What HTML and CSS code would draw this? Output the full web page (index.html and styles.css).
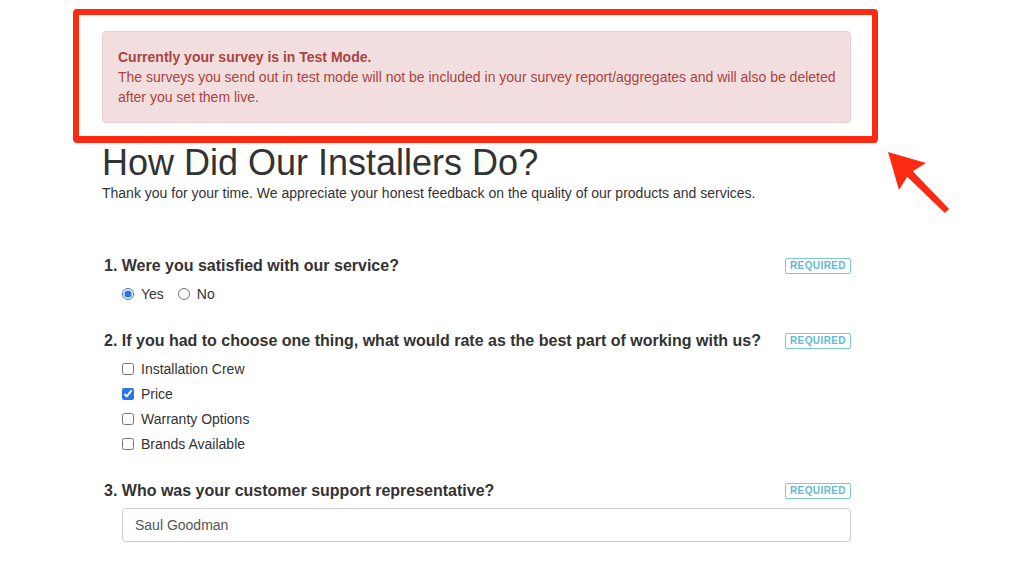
FILE: index.html
```html
<!DOCTYPE html>
<html lang="en">
<head>
    <meta charset="UTF-8">
    <meta name="viewport" content="width=device-width, initial-scale=1.0">
    <title>How Did Our Installers Do?</title>
    <link rel="stylesheet" href="styles.css">
</head>
<body>
    <div class="page">
        <div class="survey">
            <!-- Test mode notice -->
            <div class="notice-wrap">
                <div class="alert">
                    <strong>Currently your survey is in Test Mode.</strong><br>
                    The surveys you send out in test mode will not be included in your survey report/aggregates and will also be deleted after you set them live.
                </div>
                <div class="highlight"></div>
                <svg class="pointer" width="70" height="70" viewBox="0 0 70 70">
                    <polygon points="3,2 41,13 27.8,21.2 64.1,58.9 59.9,63.1 22.2,26.8 14,40" fill="#fb2a10"/>
                </svg>
            </div>

            <h1>How Did Our Installers Do?</h1>
            <p class="intro">Thank you for your time. We appreciate your honest feedback on the quality of our products and services.</p>

            <!-- Questions -->
            <div class="question">
                <div class="q-head">
                    <span class="q-title">1. Were you satisfied with our service?</span>
                    <span class="badge">REQUIRED</span>
                </div>
                <div class="options inline">
                    <label class="option"><input type="radio" name="q1" checked> Yes</label>
                    <label class="option"><input type="radio" name="q1"> No</label>
                </div>
            </div>

            <div class="question">
                <div class="q-head">
                    <span class="q-title">2. If you had to choose one thing, what would rate as the best part of working with us?</span>
                    <span class="badge">REQUIRED</span>
                </div>
                <div class="options">
                    <label class="option"><input type="checkbox"> Installation Crew</label>
                    <label class="option"><input type="checkbox" checked> Price</label>
                    <label class="option"><input type="checkbox"> Warranty Options</label>
                    <label class="option"><input type="checkbox"> Brands Available</label>
                </div>
            </div>

            <div class="question">
                <div class="q-head">
                    <span class="q-title">3. Who was your customer support representative?</span>
                    <span class="badge">REQUIRED</span>
                </div>
                <div class="options">
                    <input type="text" class="text-input" value="Saul Goodman">
                </div>
            </div>
        </div>
    </div>
</body>
</html>
```

FILE: styles.css
```css
/* General Styling */
body {
    margin: 0;
    font-family: "Liberation Sans", Arial, Helvetica, sans-serif;
    font-size: 14px;
    line-height: 20px;
    color: #333;
    background: #fff;
}

.page {
    padding: 31px 0 0 102px;
}

.survey {
    width: 749px;
}

/* Test mode notice + annotation */
.notice-wrap {
    position: relative;
    margin-bottom: 20px;
}

.alert {
    padding: 15px 10px 15px 15px;
    background: #f2dede;
    border: 1px solid #ebccd1;
    border-radius: 4px;
    color: #a94442;
}

.highlight {
    position: absolute;
    left: -29px;
    top: -22px;
    right: -27px;
    bottom: -20px;
    border: 6px solid #fb2a10;
    border-bottom-width: 7px;
    border-radius: 4px;
}

.pointer {
    position: absolute;
    left: 783px;
    top: 119px;
}

h1 {
    margin: 0;
    font-size: 36px;
    font-weight: 500;
    line-height: 1.1;
}

.intro {
    margin: 0 0 53px;
}

/* Questions */
.question {
    margin-bottom: 24px;
}

.q-head {
    display: flex;
    justify-content: space-between;
    align-items: center;
    padding-left: 2px;
}

.q-title {
    font-size: 16px;
    font-weight: bold;
    line-height: 20px;
}

.badge {
    width: 64px;
    height: 14px;
    border: 1px solid #7cc7db;
    border-radius: 2px;
    color: #62b9d2;
    font-size: 10px;
    font-weight: bold;
    line-height: 14px;
    text-align: center;
    letter-spacing: 0.4px;
}

.options {
    padding-left: 20px;
    margin-top: 6px;
}

.options.inline {
    display: flex;
    gap: 14px;
}

.option {
    display: flex;
    align-items: center;
    height: 25px;
}

.option input {
    margin: 0 7px 0 0;
    width: 12px;
    height: 12px;
    accent-color: #2a74e6;
}

.text-input {
    box-sizing: border-box;
    width: 729px;
    height: 34px;
    margin-top: 1px;
    padding: 6px 12px;
    border: 1px solid #ccc;
    border-radius: 4px;
    font-family: inherit;
    font-size: 14px;
    color: #555;
    outline: none;
}
```
